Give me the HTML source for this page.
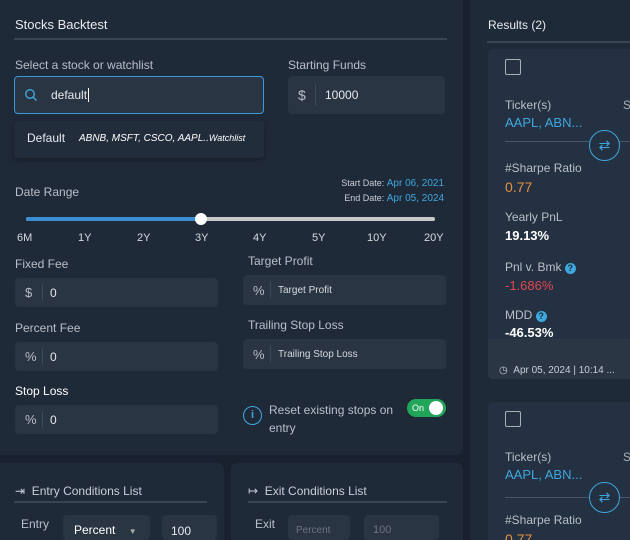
<!DOCTYPE html>
<html style="width:630px;height:540px;overflow:hidden"><head><style>
*{box-sizing:border-box;margin:0;padding:0}
body{width:630px;height:540px;background:#18212d;font-family:"Liberation Sans",sans-serif;color:#c9ced6;position:relative;overflow:hidden;font-size:12px}
.a{position:absolute}
.panel{background:#1f2a39;border-radius:6px}
.lbl{color:#b9bfc8;font-size:12px}
.inp{background:#2a3543;border-radius:4px;color:#e6e9ee}
.pre{position:absolute;left:10px;top:0;bottom:0;display:flex;align-items:center;color:#b8bec7;font-size:13px}
.sep{position:absolute;left:28px;top:8px;bottom:8px;width:1px;background:#3d4957}
.val{position:absolute;left:35px;top:0;bottom:0;display:flex;align-items:center;font-size:12px}
.w{color:#fff}
.blue{color:#3fa7de}
</style></head><body>
<div class="a panel" style="left:-6px;top:-6px;width:469px;height:461px"></div>
<div class="a" style="left:15px;top:17px;font-size:13px;color:#e8ebef">Stocks Backtest</div>
<div class="a" style="left:14px;top:38px;width:433px;height:2px;background:#3a4553"></div>
<div class="a lbl" style="left:15px;top:58px">Select a stock or watchlist</div>
<div class="a" style="left:14px;top:76px;width:250px;height:38px;background:#2a3543;border:1px solid #3a9bd4;border-radius:4px"></div>
<svg class="a" style="left:24px;top:88px" width="14" height="14" viewBox="0 0 14 14"><circle cx="6" cy="6" r="4.3" fill="none" stroke="#3fa7de" stroke-width="1.4"/><path d="M9 9l3.5 3.5" stroke="#3fa7de" stroke-width="1.4"/></svg>
<div class="a" style="left:51px;top:88px;color:#e6e9ee">default<span style="border-left:1px solid #fff;margin-left:1px"></span></div>
<div class="a" style="left:14px;top:121px;width:250px;height:37px;background:#222d3b;border-radius:4px;box-shadow:0 2px 6px rgba(0,0,0,.3)"></div>
<div class="a" style="left:27px;top:131px;color:#e6e9ee">Default</div>
<div class="a" style="left:79px;top:133px;color:#fff;font-style:italic;font-size:10px">ABNB, MSFT, CSCO, AAPL..<span style="font-size:9px">Watchlist</span></div>
<div class="a lbl" style="left:288px;top:58px">Starting Funds</div>
<div class="a inp" style="left:288px;top:76px;width:157px;height:38px"><div class="pre" style="font-size:14px">$</div><div class="sep" style="left:27px"></div><div class="val" style="left:37px">10000</div></div>
<div class="a lbl" style="left:15px;top:185px">Date Range</div>
<div class="a" style="right:186px;top:178px;font-size:9px;color:#c9ced6">Start Date: <span class="blue" style="font-size:10px">Apr 06, 2021</span></div>
<div class="a" style="right:186px;top:193px;font-size:9px;color:#c9ced6">End Date: <span class="blue" style="font-size:10px">Apr 05, 2024</span></div>
<div class="a" style="left:26px;top:217px;width:409px;height:4px;background:#c8c8c8;border-radius:2px"></div>
<div class="a" style="left:26px;top:217px;width:175px;height:4px;background:#3a8fd4;border-radius:2px"></div>
<div class="a" style="left:195px;top:213px;width:12px;height:12px;border-radius:50%;background:#fff"></div>
<div class="a" style="left:0;top:232px;width:460px;font-size:11px;color:#d5d9df">
<span class="a" style="left:17px">6M</span><span class="a" style="left:78px">1Y</span><span class="a" style="left:137px">2Y</span><span class="a" style="left:195px">3Y</span><span class="a" style="left:253px">4Y</span><span class="a" style="left:312px">5Y</span><span class="a" style="left:367px">10Y</span><span class="a" style="left:424px">20Y</span></div>
<div class="a lbl" style="left:15px;top:257px">Fixed Fee</div>
<div class="a inp" style="left:15px;top:278px;width:203px;height:29px"><div class="pre" style="font-size:13px">$</div><div class="sep" style="left:27px;top:6px;bottom:6px"></div><div class="val">0</div></div>
<div class="a lbl" style="left:15px;top:321px">Percent Fee</div>
<div class="a inp" style="left:15px;top:342px;width:203px;height:29px"><div class="pre">%</div><div class="sep" style="left:27px;top:6px;bottom:6px"></div><div class="val">0</div></div>
<div class="a" style="left:15px;top:384px;color:#fff">Stop Loss</div>
<div class="a inp" style="left:15px;top:405px;width:203px;height:29px"><div class="pre">%</div><div class="sep" style="left:27px;top:6px;bottom:6px"></div><div class="val">0</div></div>
<div class="a lbl" style="left:248px;top:254px">Target Profit</div>
<div class="a inp" style="left:243px;top:275px;width:203px;height:30px"><div class="pre">%</div><div class="sep" style="left:27px;top:6px;bottom:6px"></div><div class="val" style="font-size:10px;color:#d5d9df">Target Profit</div></div>
<div class="a lbl" style="left:248px;top:318px">Trailing Stop Loss</div>
<div class="a inp" style="left:243px;top:339px;width:203px;height:30px"><div class="pre">%</div><div class="sep" style="left:27px;top:6px;bottom:6px"></div><div class="val" style="font-size:10px;color:#d5d9df">Trailing Stop Loss</div></div>
<div class="a" style="left:243px;top:406px;width:19px;height:19px;border:1.5px solid #3fa7de;border-radius:50%;color:#3fa7de;font-size:11px;text-align:center;line-height:16px;font-weight:bold">i</div>
<div class="a lbl" style="left:269px;top:401px;line-height:18px;width:140px">Reset existing stops on entry</div>
<div class="a" style="left:407px;top:399px;width:39px;height:18px;border-radius:9px;background:#21a559"></div>
<div class="a" style="left:412px;top:403px;font-size:9px;color:#fff">On</div>
<div class="a" style="left:429px;top:401px;width:14px;height:14px;border-radius:50%;background:#fff"></div>
<div class="a panel" style="left:-6px;top:463px;width:230px;height:77px;border-radius:6px 6px 0 0"></div>
<div class="a panel" style="left:231px;top:463px;width:232px;height:77px;border-radius:6px 6px 0 0"></div>
<div class="a" style="left:15px;top:484px;font-size:12px;color:#c9ced6">⇥&nbsp; Entry Conditions List</div>
<div class="a" style="left:14px;top:501px;width:193px;height:2px;background:#3a4553"></div>
<div class="a" style="left:248px;top:484px;font-size:12px;color:#c9ced6">↦&nbsp; Exit Conditions List</div>
<div class="a" style="left:248px;top:501px;width:199px;height:2px;background:#3a4553"></div>
<div class="a lbl" style="left:21px;top:517px">Entry</div>
<div class="a inp" style="left:63px;top:515px;width:87px;height:25px;padding:8px 11px;color:#fff;font-size:12px">Percent <span style="font-size:8px;color:#aaa;margin-left:10px">▼</span></div>
<div class="a inp" style="left:162px;top:515px;width:55px;height:25px;padding:9px 9px;font-size:12px">100</div>
<div class="a lbl" style="left:255px;top:517px">Exit</div>
<div class="a inp" style="left:288px;top:515px;width:62px;height:25px;padding:10px 8px;font-size:10px;color:#6c7581">Percent</div>
<div class="a inp" style="left:364px;top:515px;width:75px;height:25px;padding:9px 9px;font-size:11px;color:#6c7581">100</div>
<div class="a panel" style="left:470px;top:-6px;width:160px;height:546px;border-radius:6px 0 0 0"></div>
<div class="a" style="left:488px;top:18px;color:#e8ebef;font-size:12px">Results (2)</div>
<div class="a" style="left:487px;top:41px;width:143px;height:2px;background:#3a4553"></div>
<div class="a" style="left:488px;top:49px;width:142px;height:330px;background:#243142;border-radius:5px 0 0 5px"></div>
<div class="a" style="left:488px;top:339px;width:142px;height:40px;background:#2a3644;border-radius:0 0 0 5px"></div>
<div class="a" style="left:505px;top:59px;width:16px;height:16px;border:1.5px solid #aab0b8;border-radius:2px"></div>
<div class="a lbl" style="left:505px;top:98px">Ticker(s)</div>
<div class="a" style="left:623px;top:98px;color:#aab0b8">S</div>
<div class="a blue" style="left:505px;top:115px;font-size:13px">AAPL, ABN...</div>
<div class="a" style="left:505px;top:141px;width:125px;height:1px;background:#4a5563"></div>
<div class="a" style="left:589px;top:130px;width:31px;height:31px;border:1.2px solid #3fa7de;border-radius:50%;background:#243142;color:#3fa7de;text-align:center;line-height:28px;font-size:14px">⇄</div>
<div class="a lbl" style="left:505px;top:161px">#Sharpe Ratio</div>
<div class="a" style="left:505px;top:179px;color:#e5913d;font-size:14px">0.77</div>
<div class="a lbl" style="left:505px;top:210px">Yearly PnL</div>
<div class="a w" style="left:505px;top:228px;font-weight:bold;font-size:13px">19.13%</div>
<div class="a lbl" style="left:505px;top:260px">Pnl v. Bmk <span style="display:inline-block;width:11px;height:11px;border-radius:50%;background:#3fa7de;color:#1f2a39;font-size:9px;text-align:center;line-height:11px;font-weight:bold">?</span></div>
<div class="a" style="left:505px;top:278px;color:#e0474f;font-size:13px">-1.686%</div>
<div class="a lbl" style="left:505px;top:308px">MDD <span style="display:inline-block;width:11px;height:11px;border-radius:50%;background:#3fa7de;color:#1f2a39;font-size:9px;text-align:center;line-height:11px;font-weight:bold">?</span></div>
<div class="a w" style="left:505px;top:325px;font-weight:bold;font-size:13px">-46.53%</div>
<div class="a" style="left:499px;top:365px;font-size:10px;color:#c9ced6">◷&nbsp;&nbsp;Apr 05, 2024 | 10:14 ...</div>
<div class="a" style="left:488px;top:402px;width:142px;height:138px;background:#243142;border-radius:5px 0 0 0"></div>
<div class="a" style="left:505px;top:411px;width:16px;height:16px;border:1.5px solid #aab0b8;border-radius:2px"></div>
<div class="a lbl" style="left:505px;top:450px">Ticker(s)</div>
<div class="a" style="left:623px;top:450px;color:#aab0b8">S</div>
<div class="a blue" style="left:505px;top:467px;font-size:13px">AAPL, ABN...</div>
<div class="a" style="left:505px;top:497px;width:125px;height:1px;background:#4a5563"></div>
<div class="a" style="left:589px;top:482px;width:31px;height:31px;border:1.2px solid #3fa7de;border-radius:50%;background:#243142;color:#3fa7de;text-align:center;line-height:28px;font-size:14px">⇄</div>
<div class="a lbl" style="left:505px;top:513px">#Sharpe Ratio</div>
<div class="a" style="left:505px;top:531px;color:#e5913d;font-size:14px">0.77</div>
</body></html>
